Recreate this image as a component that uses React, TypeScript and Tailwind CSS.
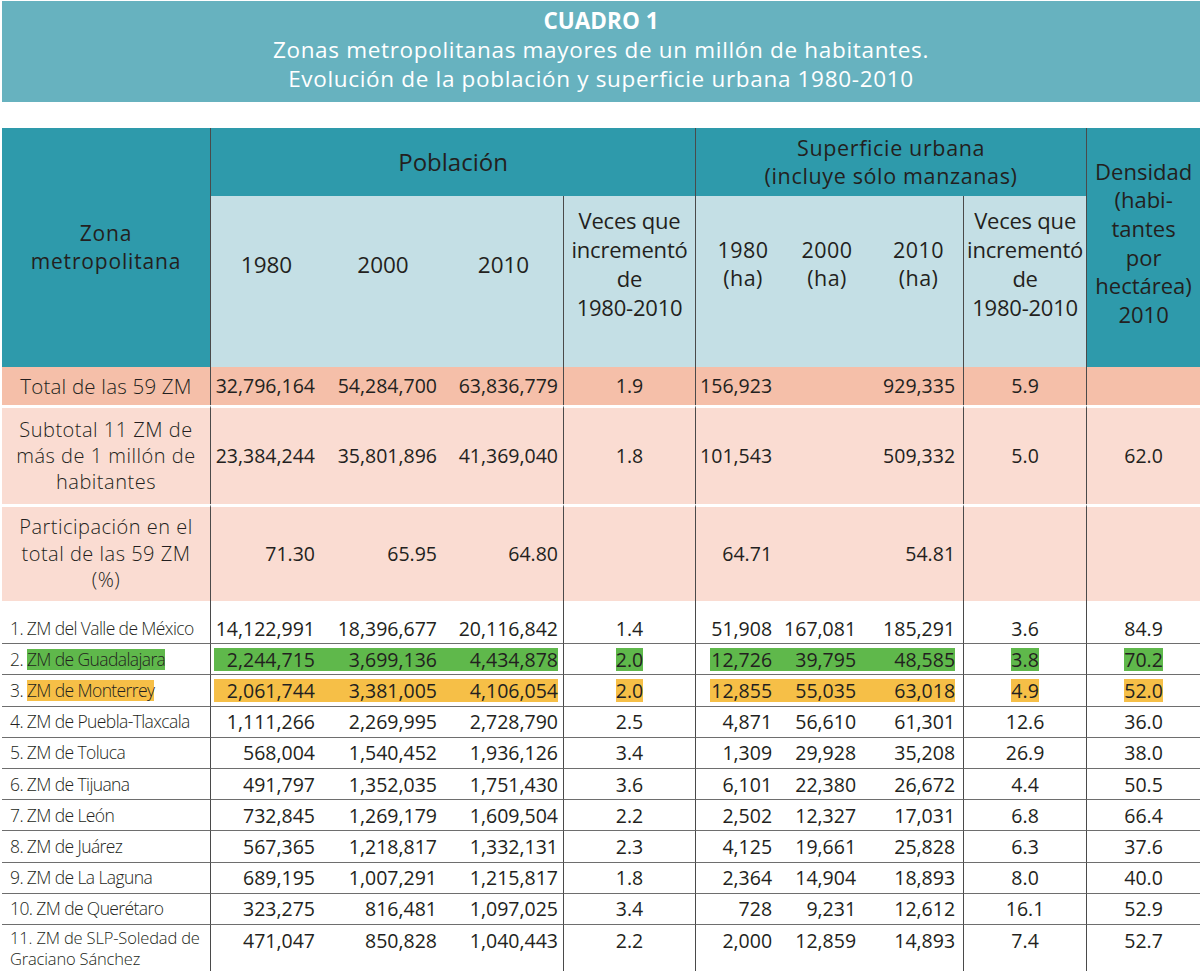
import React from "react";

type Hl = "g" | "o" | null;

const rows: { label: string; pre?: string; hl: Hl; v: string[]; two?: boolean }[] = [
  { label: "1. ZM del Valle de México", hl: null, v: ["14,122,991", "18,396,677", "20,116,842", "1.4", "51,908", "167,081", "185,291", "3.6", "84.9"] },
  { pre: "2. ", label: "ZM de Guadalajara", hl: "g", v: ["2,244,715", "3,699,136", "4,434,878", "2.0", "12,726", "39,795", "48,585", "3.8", "70.2"] },
  { pre: "3. ", label: "ZM de Monterrey", hl: "o", v: ["2,061,744", "3,381,005", "4,106,054", "2.0", "12,855", "55,035", "63,018", "4.9", "52.0"] },
  { label: "4. ZM de Puebla-Tlaxcala", hl: null, v: ["1,111,266", "2,269,995", "2,728,790", "2.5", "4,871", "56,610", "61,301", "12.6", "36.0"] },
  { label: "5. ZM de Toluca", hl: null, v: ["568,004", "1,540,452", "1,936,126", "3.4", "1,309", "29,928", "35,208", "26.9", "38.0"] },
  { label: "6. ZM de Tijuana", hl: null, v: ["491,797", "1,352,035", "1,751,430", "3.6", "6,101", "22,380", "26,672", "4.4", "50.5"] },
  { label: "7. ZM de León", hl: null, v: ["732,845", "1,269,179", "1,609,504", "2.2", "2,502", "12,327", "17,031", "6.8", "66.4"] },
  { label: "8. ZM de Juárez", hl: null, v: ["567,365", "1,218,817", "1,332,131", "2.3", "4,125", "19,661", "25,828", "6.3", "37.6"] },
  { label: "9. ZM de La Laguna", hl: null, v: ["689,195", "1,007,291", "1,215,817", "1.8", "2,364", "14,904", "18,893", "8.0", "40.0"] },
  { label: "10. ZM de Querétaro", hl: null, v: ["323,275", "816,481", "1,097,025", "3.4", "728", "9,231", "12,612", "16.1", "52.9"] },
  { label: "11. ZM de SLP-Soledad de", hl: null, two: true, v: ["471,047", "850,828", "1,040,443", "2.2", "2,000", "12,859", "14,893", "7.4", "52.7"] },
];

const bgOf = (h: Hl) => (h === "g" ? "bg-[#5fb84b]" : h === "o" ? "bg-[#f6bf47]" : "");

const VL = "border-l border-l-[#4a4a4a]";

function DataRow({ r }: { r: (typeof rows)[number] }) {
  const bg = bgOf(r.hl);
  const td = `p-0 border-b border-b-[#6e6e6e] ${r.two ? "align-top pt-[4px]" : "align-middle"}`;
  const box = "h-[23px] leading-[23px]";
  return (
    <tr className={r.two ? "h-[47px]" : "h-[31.2px]"}>
      <td className={`${td} pl-[8px] text-left whitespace-nowrap text-[17.5px] tracking-[-0.035em] font-light`}>
        {r.two ? (
          <div className="text-[16.5px] tracking-[-0.01em] leading-[21px] -mt-[2px]">
            11. ZM de SLP-Soledad de
            <br />
            Graciano Sánchez
          </div>
        ) : r.pre ? (
          <div className={box}>
            {r.pre}
            <span className={`${bg} inline-block leading-[21px]`}>{r.label}</span>
          </div>
        ) : (
          <div className={box}>{r.label}</div>
        )}
      </td>
      <td className={`${td} ${VL}`}>
        <div className={`${box} ml-[3px] pr-[7px] text-right ${bg}`}>{r.v[0]}</div>
      </td>
      <td className={td}>
        <div className={`${box} pr-[7px] text-right ${bg}`}>{r.v[1]}</div>
      </td>
      <td className={td}>
        <div className={`${box} mr-[5px] text-right ${bg}`}>{r.v[2]}</div>
      </td>
      <td className={`${td} ${VL} text-center`}>
        <div className={box}>
          <span className={`inline-block ${bg}`}>{r.v[3]}</span>
        </div>
      </td>
      <td className={`${td} ${VL} text-right`}>
        <div className={box}>
          <span className={`inline-block pl-[1px] pr-[8px] ${bg}`}>{r.v[4]}</span>
        </div>
      </td>
      <td className={td}>
        <div className={`${box} pr-[6px] text-right ${bg}`}>{r.v[5]}</div>
      </td>
      <td className={td}>
        <div className={`${box} mr-[8px] text-right ${bg}`}>{r.v[6]}</div>
      </td>
      <td className={`${td} ${VL} text-center`}>
        <div className={box}>
          <span className={`inline-block ${bg}`}>{r.v[7]}</span>
        </div>
      </td>
      <td className={`${td} ${VL} text-center`}>
        <div className={box}>
          <span className={`inline-block ${bg}`}>{r.v[8]}</span>
        </div>
      </td>
    </tr>
  );
}

export default function App() {
  const teal = "bg-[#2e9aab]";
  const blue = "bg-[#c4dfe5]";
  const sal = "bg-[#f5bfa9]";
  const pale = "bg-[#fadcd2]";
  const bt = "border-t-[3px] border-t-white";
  return (
    <div className="w-[1200px] h-[971px] overflow-hidden bg-white pl-[2px] pt-[1px] font-['Open_Sans','Noto_Sans',sans-serif] text-[#231f20]">
      <div className="h-[101px] bg-[#67b2bf] text-white text-center text-[22.5px] leading-[29px] tracking-[0.03em] pt-[5px]">
        <div className="font-bold tracking-normal">CUADRO 1</div>
        <div>Zonas metropolitanas mayores de un millón de habitantes.</div>
        <div>Evolución de la población y superficie urbana 1980-2010</div>
      </div>
      <div className="h-[26px]" />
      <table className="table-fixed border-separate border-spacing-0 w-[1198px]">
        <colgroup>
          <col className="w-[208px]" />
          <col className="w-[112px]" />
          <col className="w-[122px]" />
          <col className="w-[119px]" />
          <col className="w-[132px]" />
          <col className="w-[85px]" />
          <col className="w-[82px]" />
          <col className="w-[101px]" />
          <col className="w-[123px]" />
          <col className="w-[114px]" />
        </colgroup>
        <thead>
          <tr className="h-[68px]">
            <td rowSpan={2} className={`${teal} p-0 text-center align-middle text-[21px] tracking-[0.04em] leading-[27.5px]`}>
              Zona
              <br />
              metropolitana
            </td>
            <td colSpan={4} className={`${teal} ${VL} p-0 text-center align-middle text-[24px]`}>
              Población
            </td>
            <td colSpan={4} className={`${teal} ${VL} p-0 text-center align-middle text-[21.5px] tracking-[0.03em] leading-[28px]`}>
              Superficie urbana
              <br />
              (incluye sólo manzanas)
            </td>
            <td rowSpan={2} className={`${teal} ${VL} p-0 pb-[10px] text-center align-middle text-[22px] leading-[28.6px]`}>
              Densidad
              <br />
              (habi-
              <br />
              tantes
              <br />
              por
              <br />
              hectárea)
              <br />
              2010
            </td>
          </tr>
          <tr className="h-[171px]">
            <td className={`${blue} ${VL} p-0 pb-[34px] text-center align-middle text-[22.5px]`}>1980</td>
            <td className={`${blue} p-0 pb-[34px] text-center align-middle text-[22.5px]`}>2000</td>
            <td className={`${blue} p-0 pb-[34px] text-center align-middle text-[22.5px]`}>2010</td>
            <td className={`${blue} ${VL} p-0 pb-[36px] text-center align-middle text-[22px] leading-[29px] tracking-[-0.01em]`}>
              Veces que
              <br />
              incrementó
              <br />
              de
              <br />
              1980-2010
            </td>
            <td className={`${blue} ${VL} p-0 pb-[36px] pl-[10px] text-center align-middle text-[21.5px] tracking-[0.02em] leading-[28px]`}>
              1980
              <br />
              (ha)
            </td>
            <td className={`${blue} p-0 pb-[36px] pl-[12px] text-center align-middle text-[21.5px] tracking-[0.02em] leading-[28px]`}>
              2000
              <br />
              (ha)
            </td>
            <td className={`${blue} p-0 pb-[36px] pl-[12px] text-center align-middle text-[21.5px] tracking-[0.02em] leading-[28px]`}>
              2010
              <br />
              (ha)
            </td>
            <td className={`${blue} ${VL} p-0 pb-[36px] text-center align-middle text-[22px] leading-[29px] tracking-[-0.01em]`}>
              Veces que
              <br />
              incrementó
              <br />
              de
              <br />
              1980-2010
            </td>
          </tr>
        </thead>
        <tbody className="text-[19.5px]">
          <tr className="h-[38px]">
            <td className={`${sal} p-0 text-center text-[20.5px] tracking-[0.01em] font-light`}>Total de las 59 ZM</td>
            <td className={`${sal} ${VL} p-0 pr-[7px] text-right`}>32,796,164</td>
            <td className={`${sal} p-0 pr-[7px] text-right`}>54,284,700</td>
            <td className={`${sal} p-0 pr-[5px] text-right`}>63,836,779</td>
            <td className={`${sal} ${VL} p-0 text-center`}>1.9</td>
            <td className={`${sal} ${VL} p-0 pr-[8px] text-right`}>156,923</td>
            <td className={`${sal} p-0`} />
            <td className={`${sal} p-0 pr-[8px] text-right`}>929,335</td>
            <td className={`${sal} ${VL} p-0 text-center`}>5.9</td>
            <td className={`${sal} ${VL} p-0`} />
          </tr>
          <tr className="h-[99px]">
            <td className={`${pale} ${bt} p-0 text-center text-[20px] tracking-[0.025em] leading-[26px] font-light`}>
              Subtotal 11 ZM de
              <br />
              más de 1 millón de
              <br />
              habitantes
            </td>
            <td className={`${pale} ${VL} ${bt} p-0 pr-[7px] text-right`}>23,384,244</td>
            <td className={`${pale} ${bt} p-0 pr-[7px] text-right`}>35,801,896</td>
            <td className={`${pale} ${bt} p-0 pr-[5px] text-right`}>41,369,040</td>
            <td className={`${pale} ${VL} ${bt} p-0 text-center`}>1.8</td>
            <td className={`${pale} ${VL} ${bt} p-0 pr-[8px] text-right`}>101,543</td>
            <td className={`${pale} ${bt} p-0`} />
            <td className={`${pale} ${bt} p-0 pr-[8px] text-right`}>509,332</td>
            <td className={`${pale} ${VL} ${bt} p-0 text-center`}>5.0</td>
            <td className={`${pale} ${VL} ${bt} p-0 text-center`}>62.0</td>
          </tr>
          <tr className="h-[97px]">
            <td className={`${pale} ${bt} p-0 text-center text-[20px] tracking-[0.025em] leading-[26.5px] font-light`}>
              Participación en el
              <br />
              total de las 59 ZM
              <br />
              (%)
            </td>
            <td className={`${pale} ${VL} ${bt} p-0 pr-[7px] text-right`}>71.30</td>
            <td className={`${pale} ${bt} p-0 pr-[7px] text-right`}>65.95</td>
            <td className={`${pale} ${bt} p-0 pr-[5px] text-right`}>64.80</td>
            <td className={`${pale} ${VL} ${bt} p-0`} />
            <td className={`${pale} ${VL} ${bt} p-0 pr-[8px] text-right`}>64.71</td>
            <td className={`${pale} ${bt} p-0`} />
            <td className={`${pale} ${bt} p-0 pr-[8px] text-right`}>54.81</td>
            <td className={`${pale} ${VL} ${bt} p-0`} />
            <td className={`${pale} ${VL} ${bt} p-0`} />
          </tr>
          <tr className="h-[12px]">
            <td className="p-0" />
            <td className={`${VL} p-0`} />
            <td className="p-0" />
            <td className="p-0" />
            <td className={`${VL} p-0`} />
            <td className={`${VL} p-0`} />
            <td className="p-0" />
            <td className="p-0" />
            <td className={`${VL} p-0`} />
            <td className={`${VL} p-0`} />
          </tr>
          {rows.map((r, i) => (
            <DataRow key={i} r={r} />
          ))}
        </tbody>
      </table>
    </div>
  );
}
